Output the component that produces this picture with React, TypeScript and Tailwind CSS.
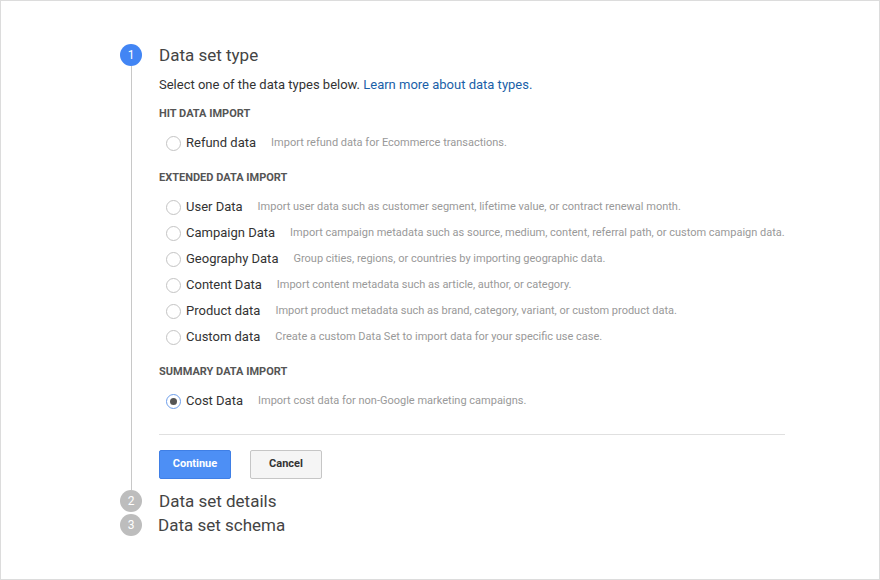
import React from 'react';

type Row = { label: string; desc: string; checked?: boolean };

const hit: Row[] = [{ label: 'Refund data', desc: 'Import refund data for Ecommerce transactions.' }];
const extended: Row[] = [
  { label: 'User Data', desc: 'Import user data such as customer segment, lifetime value, or contract renewal month.' },
  { label: 'Campaign Data', desc: 'Import campaign metadata such as source, medium, content, referral path, or custom campaign data.' },
  { label: 'Geography Data', desc: 'Group cities, regions, or countries by importing geographic data.' },
  { label: 'Content Data', desc: 'Import content metadata such as article, author, or category.' },
  { label: 'Product data', desc: 'Import product metadata such as brand, category, variant, or custom product data.' },
  { label: 'Custom data', desc: 'Create a custom Data Set to import data for your specific use case.' },
];
const summary: Row[] = [{ label: 'Cost Data', desc: 'Import cost data for non-Google marketing campaigns.', checked: true }];

function RadioRow({ row }: { row: Row }) {
  return (
    <label className="flex items-center h-[26px] pl-[7px] cursor-pointer">
      {row.checked ? (
        <span className="w-[15px] h-[15px] rounded-full border border-[#6d9eeb] flex items-center justify-center bg-white">
          <span className="w-[7px] h-[7px] rounded-full bg-[#555]" />
        </span>
      ) : (
        <span className="w-[15px] h-[15px] rounded-full border border-[#c4c4c4] bg-white" />
      )}
      <span className="ml-[5px] text-[13px] text-[#333]">{row.label}</span>
      <span className="ml-[15px] text-[11px] text-[#999]">{row.desc}</span>
    </label>
  );
}

function Section({ title, rows, first }: { title: string; rows: Row[]; first?: boolean }) {
  return (
    <div>
      <div className={`${first ? 'mt-[12px]' : 'mt-[14px]'} text-[11px] leading-[16px] font-bold text-[#555]`}>{title}</div>
      <div className="mt-[8px]">
        {rows.map(r => (
          <RadioRow key={r.label} row={r} />
        ))}
      </div>
    </div>
  );
}

function StepCircle({ n, active }: { n: number; active?: boolean }) {
  return (
    <div
      className={`w-[22px] h-[22px] rounded-full flex items-center justify-center text-[12px] text-white shrink-0 ${
        active ? 'bg-[#4285f4]' : 'bg-[#bdbdbd]'
      }`}
    >
      {n}
    </div>
  );
}

export default function App() {
  return (
    <div className="w-[880px] h-[580px] bg-white border border-[#dcdcdc] font-['Roboto',sans-serif] pl-[119px] pt-[43px]">
      {/* Step 1 */}
      <div className="flex">
        <div className="flex flex-col items-center w-[22px]">
          <StepCircle n={1} active />
          <div className="w-px flex-1 bg-[#c8c8c8]" />
        </div>
        <div className="ml-[17px] w-[626px] pb-[11px]">
          <h2 className="text-[17px] leading-[22px] text-[#444]">Data set type</h2>
          <p className="mt-[10px] text-[13px] leading-[18px] text-[#333]">
            Select one of the data types below. <a className="text-[#1a5fa8]">Learn more about data types.</a>
          </p>
          <Section title="HIT DATA IMPORT" rows={hit} first />
          <Section title="EXTENDED DATA IMPORT" rows={extended} />
          <Section title="SUMMARY DATA IMPORT" rows={summary} />
          <div className="mt-[20px] border-t border-[#e0e0e0]" />
          <div className="mt-[15px] flex gap-[19px]">
            <button className="w-[72px] h-[29px] rounded-[2px] bg-[#4d8ff5] border border-[#3f7fe6] text-white text-[11px] font-bold">
              Continue
            </button>
            <button className="w-[72px] h-[29px] rounded-[2px] bg-[#f5f5f5] border border-[#c6c6c6] text-[#333] text-[11px] font-bold">
              Cancel
            </button>
          </div>
        </div>
      </div>

      {/* Step 2 */}
      <div className="flex items-center">
        <StepCircle n={2} />
        <h2 className="ml-[17px] text-[17px] leading-[22px] text-[#444]">Data set details</h2>
      </div>
      <div className="flex items-center mt-[2px]">
        <StepCircle n={3} />
        <h2 className="ml-[16px] text-[17px] leading-[22px] text-[#444]">Data set schema</h2>
      </div>
    </div>
  );
}
